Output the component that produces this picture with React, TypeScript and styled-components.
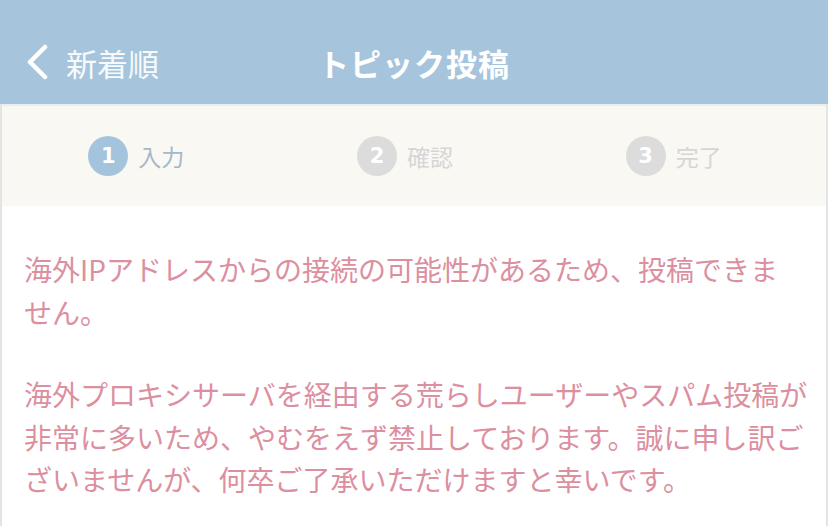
import React from "react";
import styled, { createGlobalStyle } from "styled-components";

const GlobalStyle = createGlobalStyle`
  html, body {
    margin: 0;
    padding: 0;
    background: #ffffff;
  }
  body {
    font-family: "Noto Sans CJK JP", "Noto Sans", sans-serif;
  }
`;

const Page = styled.div`
  width: 828px;
  height: 526px;
  overflow: hidden;
  display: flex;
  flex-direction: column;
`;

const Header = styled.header`
  height: 104px;
  flex-shrink: 0;
  box-sizing: border-box;
  padding-top: 20px;
  background: #a6c5dd;
  display: grid;
  grid-template-columns: 1fr auto 1fr;
  align-items: center;
  color: #ffffff;
`;

const BackLink = styled.a`
  display: flex;
  align-items: center;
  gap: 18px;
  padding-left: 26px;
  font-size: 31px;
  font-weight: 400;
  color: #f7fafc;
  text-decoration: none;
`;

const Title = styled.h1`
  margin: 0;
  font-size: 31px;
  font-weight: 700;
  letter-spacing: 1px;
  color: #ffffff;
`;

const Frame = styled.div`
  flex: 1;
  border-left: 2px solid #e4e4e4;
  border-right: 2px solid #e4e4e4;
`;

const Steps = styled.ol`
  margin: 0;
  padding: 0 18px 0 0;
  list-style: none;
  height: 102px;
  box-sizing: border-box;
  border-top: 2px solid #e6eef4;
  background: #faf8f3;
  display: grid;
  grid-template-columns: repeat(3, 1fr);
  align-items: center;
`;

const Step = styled.li<{ $active?: boolean }>`
  display: flex;
  align-items: center;
  justify-content: center;
  gap: 10px;
  font-size: 23px;
  color: ${(p) => (p.$active ? "#a3b8ca" : "#d6d6d6")};
`;

const StepNum = styled.span<{ $active?: boolean }>`
  width: 40px;
  height: 40px;
  border-radius: 50%;
  background: ${(p) => (p.$active ? "#a4c4dd" : "#dcdcdc")};
  color: #ffffff;
  font-family: "DejaVu Sans", sans-serif;
  font-weight: 700;
  font-size: 21px;
  display: flex;
  align-items: center;
  justify-content: center;
`;

const Content = styled.div`
  padding: 42px 14px 0 22px;
`;

const Notice = styled.p`
  margin: 0 0 40px;
  font-size: 28px;
  line-height: 42.5px;
  color: #dc8f9f;
`;

const Keep = styled.span`
  white-space: nowrap;
`;

const steps = ["入力", "確認", "完了"];

export default function App() {
  return (
    <Page>
      <GlobalStyle />
      <Header>
        <BackLink href="#">
          <svg width="22" height="36" viewBox="0 0 22 36">
            <polyline
              points="19,3 4,18 19,33"
              fill="none"
              stroke="#ffffff"
              strokeWidth="4.5"
              strokeLinecap="round"
              strokeLinejoin="round"
            />
          </svg>
          新着順
        </BackLink>
        <Title>トピック投稿</Title>
        <div />
      </Header>
      <Frame>
        <Steps>
          {steps.map((label, i) => (
            <Step key={label} $active={i === 0}>
              <StepNum $active={i === 0}>{i + 1}</StepNum>
              {label}
            </Step>
          ))}
        </Steps>
        <Content>
          <Notice>
            海外IPアドレスからの接続の可能性があるため、投稿できま<Keep>せん。</Keep>
          </Notice>
          <Notice>
            海外プロキシサーバを経由する荒らしユーザーやスパム投稿が非常に多いため、やむをえず禁止しております。誠に申し訳ございませんが、何卒ご了承いただけますと幸いです。
          </Notice>
        </Content>
      </Frame>
    </Page>
  );
}
